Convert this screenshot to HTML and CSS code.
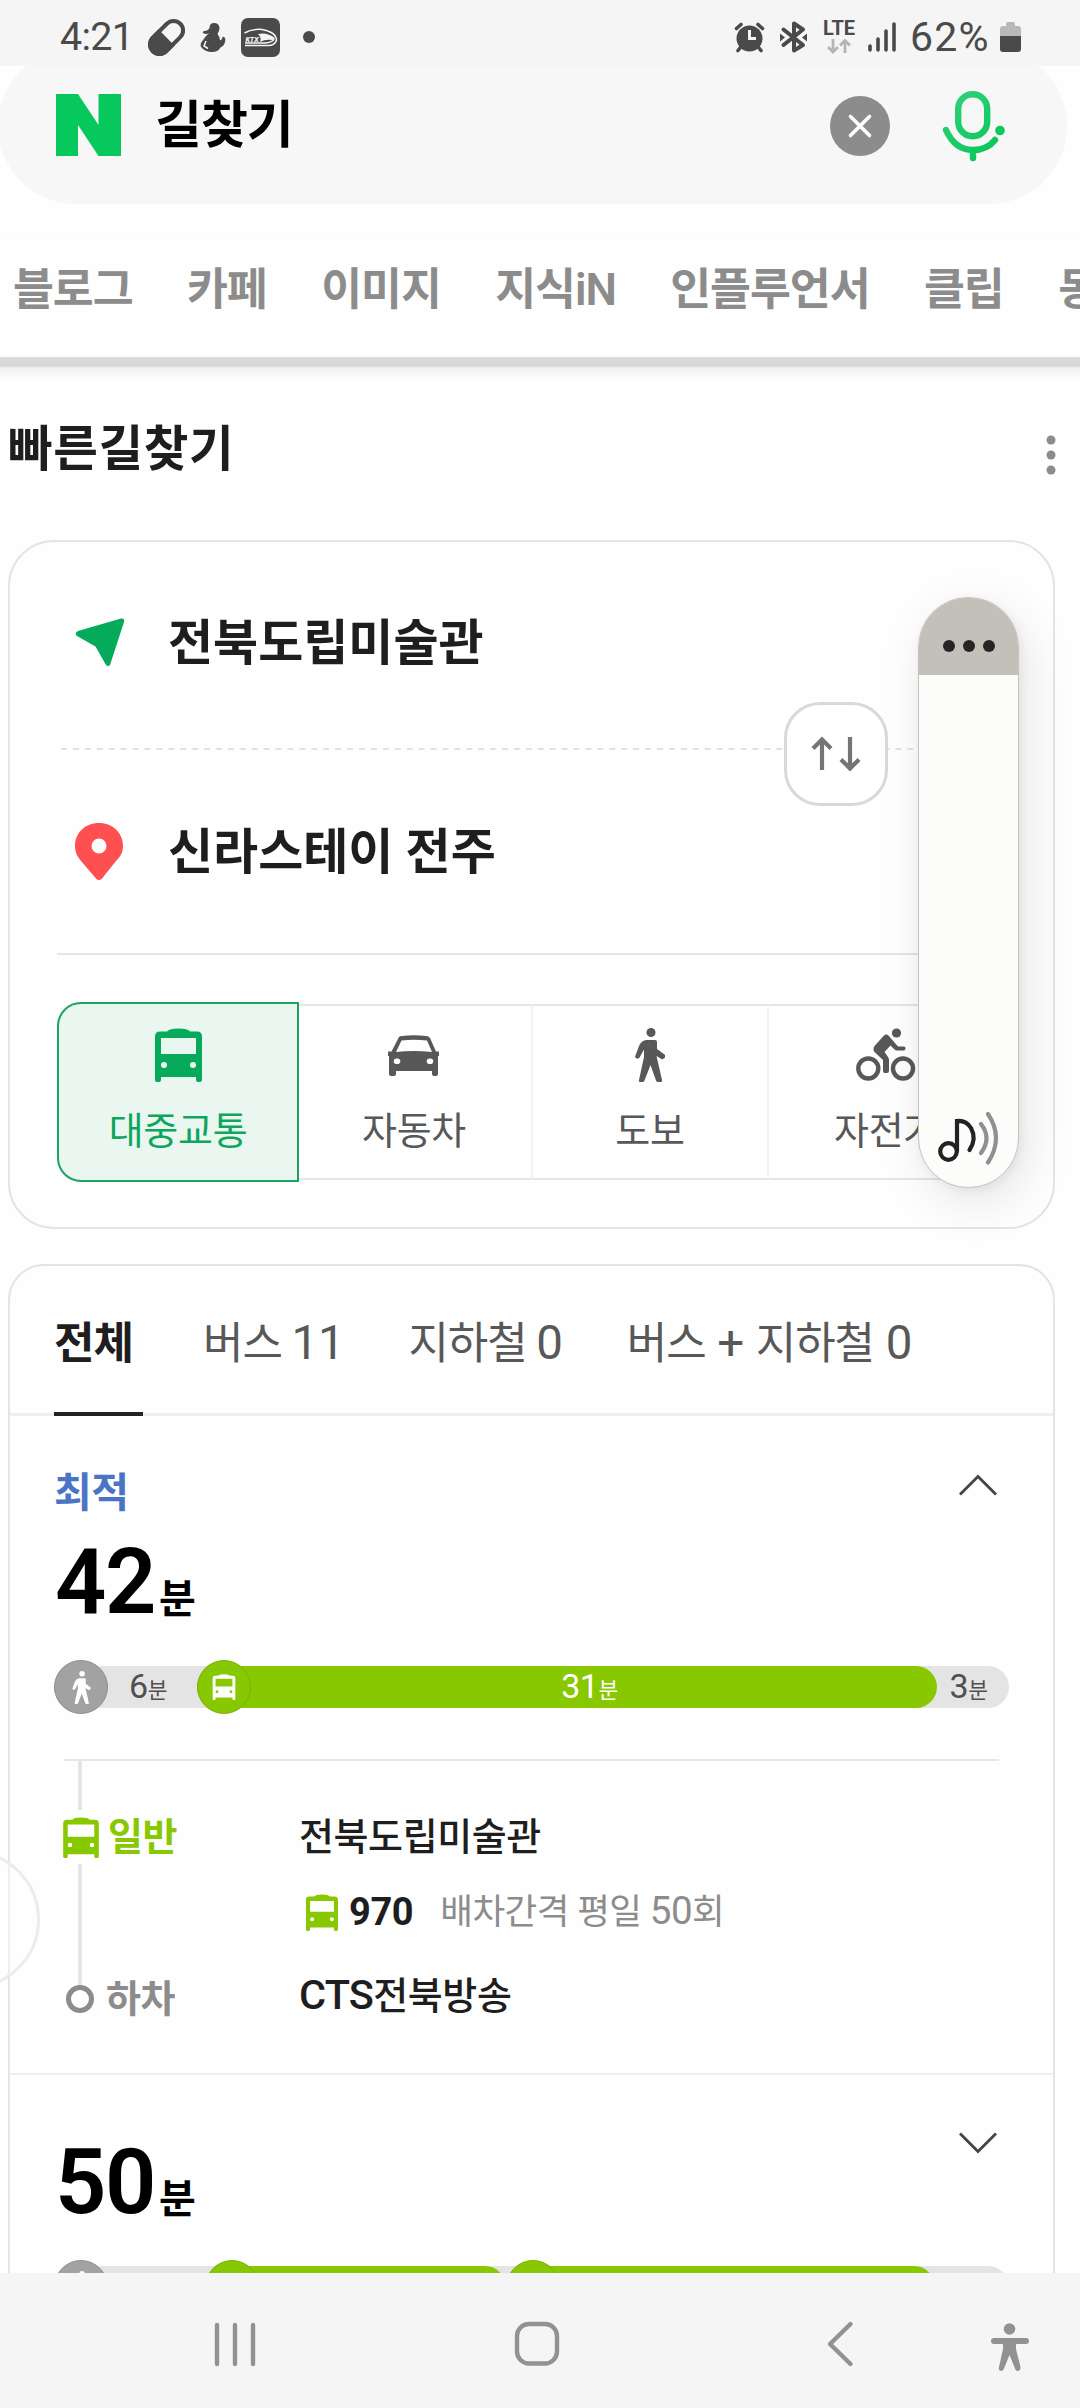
FILE: index.html
```html
<!DOCTYPE html>
<html lang="ko">
<head>
<meta charset="utf-8">
<title>길찾기</title>
<link rel="stylesheet" href="styles.css">
</head>
<body>
<svg class="defs" width="0" height="0">
  <symbol id="bus" viewBox="0 0 47 54">
    <path fill-rule="evenodd" d="M5 3.500H12Q14 .5 23.500 .5Q33 .5 35 3.500H42Q47 3.500 47 8.500V52Q47 54 45 54H43Q41 54 41 52V49H6V52Q6 54 4 54H2Q0 54 0 52V8.500Q0 3.500 5 3.500ZM6 10V26H41V10ZM9 34A3 3 0 1 0 9 40A3 3 0 1 0 9 34ZM38 34A3 3 0 1 0 38 40A3 3 0 1 0 38 34Z"/>
  </symbol>
  <symbol id="walk" viewBox="0 0 30 54">
    <circle cx="16" cy="4.500" r="4.500"/>
    <path d="M11 12H20Q22 12 22 14V21L29.500 26.500Q31 28 29.500 30L28 31Q27 31.500 25.500 30.500L21.500 28L27 52Q27.500 54 25.500 54H23Q21.500 54 21 52.500L15.500 37L9.500 52.500Q9 54 7.500 54H5Q3.500 54 4 52L9 29V21.500L4.500 29.500Q3.500 31 2 30.500L1 30Q-.5 29.500 .5 27.500L4 18Q6 13 11 12Z"/>
  </symbol>
</svg>
<div class="screen">
  <header class="status">
    <span class="clock">4:21</span>
    <svg class="status-left" width="180" height="66" viewBox="140 0 180 66">
      <g transform="rotate(45 166.500 37.500)">
        <rect x="157" y="18" width="19" height="39" rx="9.500" fill="none" stroke="#4a4a4a" stroke-width="4"/>
        <path d="M155 37.500H178V47A11.500 11.500 0 0 1 155 47Z" fill="#4a4a4a"/>
      </g>
      <g fill="#4a4a4a">
        <path d="M214 23Q219 23 219.500 28Q219.500 31 217.500 34Q219.500 36.500 220 40Q222 41 222.500 37Q222.500 36.500 224 37Q226 38 225 42Q224 46 220.500 47.500Q218 52 212 52Q205 52 201 47Q199.500 44 203 40L206 36Q208 34 209.500 33Q206 35 203 33Q202 32 204 31Q208 31 209.500 28Q209.500 23 214 23Z"/>
        <rect x="241" y="18" width="39" height="39" rx="7"/>
        <circle cx="309" cy="37" r="6"/>
      </g>
      <path d="M206 41L204 46L208 48.500" fill="none" stroke="#f5f5f5" stroke-width="1.500"/>
      <path d="M244.500 33Q252 28.500 262 29.500Q276 32 276.500 40Q275 45.500 268 45.500H245M245 43H266Q273 42 274 39" fill="none" stroke="#f5f5f5" stroke-width="1.500"/>
      <path d="M258 34Q267 32 275 38L273 40Q265 39 260 42Q262 38 258 34Z" fill="#f5f5f5"/>
      <text x="245.500" y="42" class="ktx">KTX</text>
    </svg>
    <div class="status-right">
      <svg width="75" height="66" viewBox="734 0 75 66">
        <g fill="#4a4a4a">
          <circle cx="749.500" cy="38.500" r="13"/>
          <path d="M740 48L738 50.500M759 48L761 50.500M736.500 28.500L741 24.500M762.500 28.500L758 24.500" stroke="#4a4a4a" stroke-width="3.600" stroke-linecap="round"/>
        </g>
        <path d="M749.500 30V38.500H756" fill="none" stroke="#f5f5f5" stroke-width="3"/>
        <path d="M783.500 29.500L803 45L794 50.500V23.500L803 29.500L783.500 45" fill="none" stroke="#4a4a4a" stroke-width="4" stroke-linejoin="round" stroke-linecap="round"/>
        <path d="M780 33.500L785 37.500L780 41.500ZM807 33.500L802 37.500L807 41.500Z" fill="#4a4a4a"/>
      </svg>
      <span class="network">
        <b>LTE</b>
        <svg width="24" height="15" viewBox="0 0 24 15"><path d="M6 0V12.500M1 8L6 13L11 8M18 14V1.500M13 6.500L18 1.500L23 6.500" fill="none" stroke="#b4b4b4" stroke-width="2.800"/></svg>
      </span>
      <svg class="signal" width="28" height="30" viewBox="0 0 28 30"><path d="M2 24V28M10 17V28M18 9V28M26 2V28" stroke="#4a4a4a" stroke-width="3.600" stroke-linecap="round"/></svg>
      <span class="percent">62%</span>
      <svg class="battery" width="21" height="30" viewBox="0 0 21 30"><path d="M6 4V2Q6 0 8 0H13Q15 0 15 2V4H18Q21 4 21 7V14H0V7Q0 4 3 4Z" fill="#b8b8b8"/><path d="M0 14H21V27Q21 30 18 30H3Q0 30 0 27Z" fill="#4a4a4a"/></svg>
    </div>
  </header>

  <main>
    <div class="search">
      <div class="search-pill">
        <svg class="logo" width="65" height="62" viewBox="0 0 65 62"><path d="M0 0H22L42.500 31V0H65V62H42.500L22 31V62H0Z" fill="#06c85c"/></svg>
        <span class="query">길찾기</span>
        <svg class="clear" width="60" height="60" viewBox="0 0 60 60"><circle cx="30" cy="30" r="30" fill="#8c8c8c"/><path d="M20.500 20.500L39.500 39.500M39.500 20.500L20.500 39.500" stroke="#fff" stroke-width="3.600" stroke-linecap="round"/></svg>
        <svg class="mic" width="64" height="71" viewBox="0 0 64 71" fill="none" stroke="url(#micfill)" stroke-width="6.400" stroke-linecap="round">
          <defs><linearGradient id="micfill" gradientUnits="userSpaceOnUse" x1="0" y1="0" x2="60" y2="70"><stop offset="0" stop-color="#35d27a"/><stop offset="1" stop-color="#03c557"/></linearGradient></defs>
          <rect x="16.200" y="3.200" width="29" height="42" rx="14.500"/>
          <path d="M4 39Q13 59 31 59Q45 59 53 49M31 60V67"/>
          <circle cx="58" cy="39.500" r="4.800" fill="#0ac85a" stroke="none"/>
        </svg>
      </div>
    </div>

    <nav class="search-tabs">
      <span>블로그</span><span>카페</span><span>이미지</span><span>지식iN</span><span>인플루언서</span><span>클립</span><span>동영상</span>
    </nav>
    <div class="tabs-shadow"></div>

    <div class="section-head">
      <h2>빠른길찾기</h2>
      <svg width="10" height="40" viewBox="0 0 10 40" fill="#8c8c8c"><circle cx="5" cy="5" r="4.500"/><circle cx="5" cy="20" r="4.500"/><circle cx="5" cy="35" r="4.500"/></svg>
    </div>

    <section class="finder">
      <div class="place">
        <svg width="50" height="50" viewBox="0 0 50 50"><path d="M3 14L46 1.500Q50 1 49 5L35 48Q33 50 31 48L20.500 29.500L2 19Q-1 16 3 14Z" fill="#05aa5b"/></svg>
        <span>전북도립미술관</span>
      </div>
      <div class="dashes">
        <svg width="944" height="2"><path d="M0 1H944" stroke="#e2e2e2" stroke-width="2" stroke-dasharray="6 5.920"/></svg>
        <button class="swap" aria-label="출발 도착 바꾸기">
          <svg width="50" height="36" viewBox="0 0 50 36" fill="none" stroke="#757575" stroke-width="4.200"><path d="M11 34V4M2 12.500L11 3.500L20 12.500M39 1V32M30 23.500L39 32.500L48 23.500"/></svg>
        </button>
      </div>
      <div class="place to">
        <svg width="48" height="57" viewBox="0 0 48 57"><path fill-rule="evenodd" d="M24 0C38 0 48 10 48 23C48 30 45 34 41 38L27 55.500Q24 58.500 21 55.500L6 38C2 33 0 29 0 23C0 10 10 0 24 0ZM24 15.500A7.500 7.500 0 1 0 24 30.500A7.500 7.500 0 1 0 24 15.500Z" fill="#fe5050"/></svg>
        <span>신라스테이 전주</span>
      </div>
      <div class="modes">
        <div class="mode active"><svg width="47" height="54"><use href="#bus"/></svg><span>대중교통</span></div>
        <div class="mode"><svg width="52" height="54" viewBox="0 0 52 54"><path fill-rule="evenodd" d="M11 9Q12 8 14 8Q26 6.500 38 8Q41 8 42 10L48 23.500H51V28H50V46Q50 48 48 48H46Q44 48 44 46V43H8V46Q8 48 6 48H3Q1 48 1 46V28H0V23.500H3.500ZM13.500 12.500L8 24Q26 22 44 24L39 12.500Q26 11 13.500 12.500ZM9 30.500A2.800 2.800 0 1 0 9 36A2.800 2.800 0 1 0 9 30.500ZM42 30.500A2.800 2.800 0 1 0 42 36A2.800 2.800 0 1 0 42 30.500Z"/></svg><span>자동차</span></div>
        <div class="mode"><svg width="30" height="54"><use href="#walk"/></svg><span>도보</span></div>
        <div class="mode"><svg width="60" height="54" viewBox="0 0 60 54"><g fill="none" stroke="#585858" stroke-width="4.400"><circle cx="12.300" cy="40.500" r="10"/><circle cx="47" cy="40.500" r="10"/></g><circle cx="40.500" cy="5" r="4.600"/><path d="M28 7.500Q30 5.500 32.500 7.500L42 18.500H48Q49.500 18.500 49.500 20.500Q49.500 22.500 47.500 22.500H41Q39.500 22.500 38 21L34.500 17.500L28.500 24L32 29Q33 30.500 33 32V43Q33 45 31 45H28.500Q27 45 27 43V32L18.500 24Q16.500 21.500 18.500 18Z"/></svg><span>자전거</span></div>
      </div>
    </section>

    <section class="results">
      <nav class="filters">
        <span class="on">전체</span><span>버스 <em>11</em></span><span>지하철 <em>0</em></span><span class="both">버스 <em>+</em> 지하철 <em>0</em></span>
      </nav>
      <article class="route">
        <div class="route-head">
          <div>
            <div class="best">최적</div>
            <div class="time">42<small>분</small></div>
          </div>
          <svg class="chevron" width="40" height="22" viewBox="0 0 40 22"><path d="M2 20.500L20 2.500L38 20.500" fill="none" stroke="#444" stroke-width="2.800"/></svg>
        </div>
        <div class="bar">
          <div class="seg" style="width:143px"><i class="dot"><svg width="19" height="33"><use href="#walk"/></svg></i><span>6<small>분</small></span></div>
          <div class="seg ride" style="width:740px"><i class="dot"><svg width="24" height="26"><use href="#bus"/></svg></i><span>31<small>분</small></span></div>
          <div class="seg" style="width:72px"><span>3<small>분</small></span></div>
        </div>
        <div class="steps">
          <div class="kind board"><svg width="36" height="41"><use href="#bus"/></svg><b>일반</b></div>
          <div class="stop">전북도립미술관</div>
          <div class="line"><svg width="32" height="37"><use href="#bus"/></svg><b>970</b><span>배차간격 평일 <em>50</em>회</span></div>
          <div class="kind alight"><i></i><b>하차</b></div>
          <div class="stop"><em>CTS</em>전북방송</div>
        </div>
      </article>
      <article class="route second">
        <div class="route-head">
          <div class="time">50<small>분</small></div>
          <svg class="chevron" width="40" height="22" viewBox="0 0 40 22"><path d="M2 1.500L20 19.500L38 1.500" fill="none" stroke="#444" stroke-width="2.800"/></svg>
        </div>
        <div class="bar">
          <div class="seg" style="width:151px"><i class="dot"><svg width="19" height="33"><use href="#walk"/></svg></i></div>
          <div class="seg ride" style="width:301px"><i class="dot"><svg width="24" height="26"><use href="#bus"/></svg></i></div>
          <div class="seg ride" style="width:429px"><i class="dot"><svg width="24" height="26"><use href="#bus"/></svg></i></div>
        </div>
      </article>
    </section>
  </main>

  <footer class="navbar">
    <svg width="1080" height="135" viewBox="0 0 1080 135" fill="none" stroke="#929292" stroke-width="4.400" stroke-linecap="round">
      <path d="M217 52V91M235 52V91M253 52V91"/>
      <rect x="517" y="51" width="40" height="39.500" rx="12"/>
      <path d="M850.500 51L830 71L850.500 91" stroke-linejoin="round"/>
      <path d="M994 68H1026" stroke-width="6"/>
      <g fill="#929292" stroke="none"><circle cx="1009.500" cy="56" r="5.800"/><path d="M1002 68H1017Q1015.500 72 1016 76L1020.500 94Q1021 97.500 1018 98Q1015.500 98 1015 95.500L1009.500 82L1004 95.500Q1003 98 1001 98Q998 97.500 999 94L1003 76Q1003.500 72 1002 68Z"/></g>
    </svg>
  </footer>

  <aside class="volume">
    <div class="volume-menu"><i></i><i></i><i></i></div>
    <svg width="64" height="56" viewBox="0 0 64 56" fill="none" stroke-width="4.200" stroke-linecap="round">
      <g stroke="#222"><circle cx="11.500" cy="40.500" r="8.300"/><path d="M20 40V10Q29 9 34 17Q40 28 32.500 39"/></g>
      <path d="M44 13Q55 27 44 42M51 3Q67 27 51 51.500" stroke="#909090"/>
    </svg>
  </aside>
  <div class="edge-handle"></div>
</div>
</body>
</html>
```
FILE: styles.css
```css
* { box-sizing: border-box; }
body { margin: 0; background: #fff; }
body, button { font-family: Roboto, "Noto Sans CJK KR", sans-serif; }
svg { display: block; flex: none; }
.defs { position: absolute; }
h2 { margin: 0; }
i, em { font-style: normal; }
em { line-height: 1; }

.screen {
  position: relative;
  width: 1080px;
  height: 2408px;
  overflow: hidden;
  display: flex;
  flex-direction: column;
  background: #fefefe;
  white-space: nowrap;
}

/* status bar */
.status {
  flex: none;
  height: 66px;
  display: flex;
  background: #f5f5f5;
  color: #4a4a4a;
}
.clock, .percent { font-size: 39.500px; line-height: 74px; }
.clock { width: 80px; margin-left: 60px; letter-spacing: -.7px; }
.ktx { font: italic 900 7px Roboto, sans-serif; fill: #f5f5f5; }
.status-right {
  display: flex;
  margin-left: auto;
  margin-right: 59px;
}
.network {
  display: flex;
  flex-direction: column;
  align-items: center;
  width: 34px;
  margin: 18px 12px 0 13px;
}
.network b { font-size: 20px; line-height: 20px; font-weight: 700; margin-bottom: 1px; }
.signal { margin: 22px 14px 0 0; }
.percent { width: 90px; font-size: 41px; letter-spacing: 1.200px; }
.battery { margin-top: 22px; }

main { flex: none; height: 2207px; overflow: hidden; }

/* search header */
.search { height: 169px; overflow: hidden; }
.search-pill {
  display: flex;
  align-items: center;
  width: 1069px;
  height: 156px;
  margin: -18px 0 0 -2px;
  padding: 0 61px 0 58px;
  border-radius: 78px;
  background: #f7f7f7;
}
.logo { margin-top: -2px; }
.query {
  margin-left: 34px;
  font-size: 51px;
  font-weight: 700;
  line-height: 60px;
  letter-spacing: -1px;
  color: #000;
}
.clear { margin-left: auto; }
.mic { margin-left: 52px; }

.search-tabs {
  display: flex;
  gap: 54.500px;
  height: 122px;
  padding-left: 13px;
  border-top: 1px solid #fafafa;
  font-size: 44.500px;
  font-weight: 600;
  line-height: 109px;
  letter-spacing: -1.100px;
  color: #8c8c8c;
}
.tabs-shadow {
  height: 22px;
  background: linear-gradient(#dcdcdc 0, #d5d5d5 9px, #f1f1f1 11px, #fefefe 22px);
}

.section-head {
  display: flex;
  justify-content: space-between;
  height: 161px;
  padding: 0 24px 0 8px;
}
.section-head h2 { font-size: 48.500px; line-height: 142px; font-weight: 700; letter-spacing: .6px; color: #1e1e1e; }
.section-head svg { margin-top: 56px; }

/* origin and destination */
.finder {
  width: 1047px;
  height: 689px;
  margin-left: 8px;
  padding: 0 47px;
  border: 2px solid #e4e4e4;
  border-radius: 46px;
}
.place {
  display: flex;
  align-items: center;
  gap: 43px;
  height: 206px;
  padding: 0 0 6px 18px;
  font-size: 49px;
  font-weight: 600;
  color: #1e1e1e;
}
.place span { margin-bottom: 7px; }
.place.to { height: 203px; padding-bottom: 0; gap: 45px; }
.place.to span { margin-bottom: 9px; }
.dashes { position: relative; height: 2px; padding-left: 4px; }
.swap {
  position: absolute;
  left: 727px;
  top: -46px;
  display: flex;
  justify-content: center;
  align-items: center;
  width: 104px;
  height: 104px;
  padding: 0;
  border: 3px solid #d9d9d9;
  border-radius: 36px;
  background: #fff;
}
.modes {
  display: grid;
  grid-template-columns: 240px 236px 236px 236px;
  height: 225px;
  padding-top: 49px;
  border-top: 2px solid #e5e5e5;
}
.mode {
  display: flex;
  flex-direction: column;
  align-items: center;
  height: 176px;
  padding-top: 22px;
  border: solid #e5e5e5;
  border-width: 2px 0;
  border-right: 2px solid #f2f2f2;
  font-size: 38px;
  line-height: 50px;
  letter-spacing: -.3px;
  color: #585858;
  fill: #585858;
}
.mode span { margin-top: 24px; }
.mode:last-child { border-radius: 0 24px 24px 0; }
.mode.active {
  z-index: 1;
  width: 242px;
  height: 180px;
  margin-top: -2px;
  padding-top: 24px;
  border: 2px solid #1da361;
  border-radius: 24px 0 0 24px;
  background: #eaf7f0;
  color: #10a55c;
  fill: #07aa5b;
}

/* results */
.results {
  width: 1047px;
  height: 1100px;
  margin: 35px 0 0 8px;
  border: 2px solid #e4e4e4;
  border-radius: 36px 36px 0 0;
}
.filters {
  display: flex;
  height: 150px;
  padding-left: 44px;
  border-bottom: 3px solid #efefef;
  font-size: 44px;
  line-height: 156px;
  letter-spacing: -1.100px;
  color: #585858;
}
.filters span { height: 150px; margin-right: 64px; }
.filters em { font-size: 47.500px; letter-spacing: -.3px; }
.filters .both { word-spacing: 2px; }
.filters .on {
  width: 89px;
  margin-right: 60px;
  border-bottom: 4px solid #222;
  font-weight: 700;
  color: #1e1e1e;
}
.route { height: 659px; padding: 53px 44px 0; border-bottom: 2px solid #efefef; }
.route-head { display: flex; justify-content: space-between; }
.chevron { margin: 5px 11px 0 0; }
.second .chevron { margin-top: 4px; }
.best { font-size: 41px; font-weight: 600; line-height: 48px; letter-spacing: -.5px; color: #4a74c4; }
.time { height: 70px; font-size: 90px; font-weight: 600; line-height: 70px; margin: 31px 0 -1px 1px; color: #000; letter-spacing: -1.400px; }
.time small { font-size: 40px; line-height: 1; margin-left: 4px; }
.second .time { margin-top: 20px; }

.bar {
  display: flex;
  height: 42px;
  margin-top: 49px;
  width: 955px;
  border-radius: 21px;
  background: #e4e4e4;
}
.seg { display: flex; align-items: center; color: #505050; }
.seg.ride { border-radius: 21px; background: #88c800; color: #fff; }
.seg span { flex: 1; height: 42px; padding-right: 9px; text-align: center; font-size: 34px; line-height: 40px; letter-spacing: -.5px; }
.seg small { font-size: 21.500px; line-height: 1; }
.dot {
  flex: none;
  display: flex;
  justify-content: center;
  align-items: center;
  width: 54px;
  height: 54px;
  margin: -6px 0;
  border: 1px solid #8f8f8f;
  border-radius: 50%;
  background: #a2a2a2;
  fill: #fff;
}
.ride .dot { border-color: #7ab208; background: #88c800; }

.steps {
  position: relative;
  display: grid;
  grid-template-columns: 235px 1fr;
  grid-template-rows: 50px 50px 50px;
  align-items: center;
  width: 935px;
  margin: 51px 0 0 10px;
  padding-top: 51px;
  border-top: 2px solid #e6e6e6;
  font-size: 38px;
  line-height: 50px;
  letter-spacing: -.4px;
  row-gap: 25px;
}
.steps::before {
  content: "";
  position: absolute;
  left: 14px;
  top: 0;
  width: 4px;
  height: 226px;
  background: #e4e4e4;
}
.kind { position: relative; display: flex; align-items: center; }
.board { height: 54px; gap: 9px; background: #fefefe; color: #88c800; fill: #88c800; }
.board svg { margin-left: -1px; }
.alight { gap: 12px; margin-top: 24px; color: #8c8c8c; }
.alight i { width: 28px; height: 28px; margin-left: 2px; border: 5px solid #8c8c8c; border-radius: 50%; background: #fefefe; }
.stop { font-weight: 500; color: #1e1e1e; }
.stop em { font-size: 41.500px; letter-spacing: -.8px; }
.alight + .stop { margin-top: 18px; }
.line { grid-column: 2; display: flex; align-items: center; padding-left: 7px; fill: #88c800; }
.line b { margin: 0 27px 0 11px; font-weight: 700; color: #1e1e1e; }
.line span { font-size: 35.500px; letter-spacing: -.5px; color: #8c8c8c; }
.line em { font-size: 38.500px; }

.navbar { flex: none; height: 135px; background: #f5f5f5; }

/* floating system overlays */
.volume {
  position: absolute;
  left: 918px;
  top: 597px;
  display: flex;
  flex-direction: column;
  justify-content: space-between;
  align-items: center;
  width: 101px;
  height: 591px;
  padding-bottom: 20px;
  overflow: hidden;
  border: 1px solid #c6c3bc;
  border-radius: 50px;
  background: #fcfcfa;
  box-shadow: 8px 14px 50px rgba(0, 0, 0, .1), 2px 3px 10px rgba(0, 0, 0, .06);
}
.volume-menu {
  display: flex;
  justify-content: center;
  align-items: center;
  gap: 8px;
  width: 100%;
  height: 77px;
  padding-top: 18px;
  background: #c2c0b9;
}
.volume-menu i { width: 12px; height: 12px; border-radius: 50%; background: #252525; }
.edge-handle {
  position: absolute;
  left: -99px;
  top: 1850px;
  width: 139px;
  height: 139px;
  border: 3px solid #ecece8;
  border-radius: 50%;
  background: rgba(255, 255, 255, .4);
}
```
